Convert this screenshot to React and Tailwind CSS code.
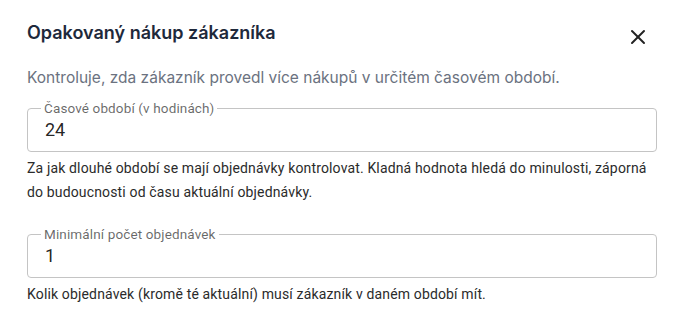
import { X } from 'lucide-react'

const fields = [
    {
        label: 'Časové období (v hodinách)',
        value: '24',
        help: 'Za jak dlouhé období se mají objednávky kontrolovat. Kladná hodnota hledá do minulosti, záporná do budoucnosti od času aktuální objednávky.',
    },
    {
        label: 'Minimální počet objednávek',
        value: '1',
        help: 'Kolik objednávek (kromě té aktuální) musí zákazník v daném období mít.',
    },
]

function Field({ label, value, help }) {
    return (
        <div>
            <fieldset className="rounded border border-[#c4c4c4] px-[13px] pb-[9px]">
                <legend className="px-[3px] text-[13.5px] leading-4 tracking-[0.13px] text-black/60 font-['Roboto',sans-serif]">{label}</legend>
                <div className="mt-[2px] pl-[4px] text-[18px] leading-6 text-black/[0.87] font-['Roboto',sans-serif]">{value}</div>
            </fieldset>
            <p className="mt-1 text-[14px] leading-6 tracking-[0.15px] text-[#2b2b2b] font-['Roboto',sans-serif]">{help}</p>
        </div>
    )
}

export default function App() {
    return (
        <div className="w-[684px] h-[325px] bg-white px-[27px] pt-[17px] font-['Inter',sans-serif]">
            <div className="flex items-center justify-between">
                <h2 className="text-[18px] leading-7 font-semibold text-[#1e293b]">Opakovaný nákup zákazníka</h2>
                <button className="mr-[7px] mt-[8px] flex h-6 w-6 items-center justify-center text-[#222]">
                    <X className="h-6 w-6" strokeWidth={2} />
                </button>
            </div>
            <p className="mt-[17px] text-[15.5px] leading-6 text-[#6b7280]">
                Kontroluje, zda zákazník provedl více nákupů v určitém časovém období.
            </p>
            <div className="mt-[10px] flex flex-col gap-[22px]">
                {fields.map((f) => (
                    <Field key={f.label} {...f} />
                ))}
            </div>
        </div>
    )
}
